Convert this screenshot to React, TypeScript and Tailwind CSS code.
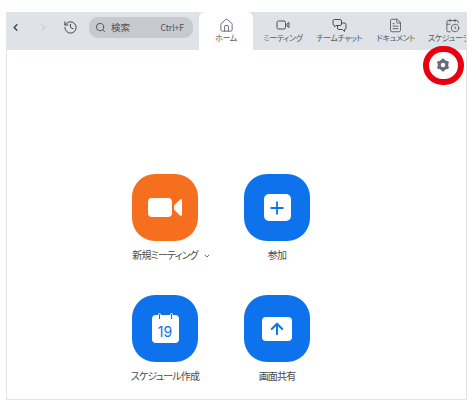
import React from "react";
import { ChevronLeft, ChevronRight, ChevronDown, Search, History, House, Plus, ArrowUp, FileText, CalendarClock } from "lucide-react";

const font = "font-['Noto_Sans_CJK_JP','Noto_Sans',sans-serif] [font-feature-settings:'palt']";

function NavTab({ icon, label, width, active }: { icon: React.ReactNode; label: string; width: string; active?: boolean }) {
  return (
    <div className={`flex shrink-0 flex-col items-center pt-[5px] ${width} ${active ? "h-[38px] rounded-t-[6px] bg-white" : ""}`}>
      <div className="flex h-[16px] items-center justify-center text-[#4a4f5c]">{icon}</div>
      <div className="-mt-[1px] whitespace-nowrap text-[8px] leading-[12px] tracking-[-0.4px] text-[#555a66]">{label}</div>
    </div>
  );
}

function Tile({ color, label, chevron, children }: { color: string; label: string; chevron?: boolean; children: React.ReactNode }) {
  return (
    <div className="relative flex w-[66px] flex-col items-center">
      <div className={`flex h-[67px] w-[66px] items-center justify-center rounded-[23px] ${color}`}>{children}</div>
      <div className="mt-[5px] flex h-[16px] items-center whitespace-nowrap text-[10px] tracking-[-0.85px] text-[#4a4a4a]">{label}</div>
      {chevron && <ChevronDown className="absolute left-[71px] top-[78px] h-[8px] w-[8px] text-[#555]" strokeWidth={2.5} />}
    </div>
  );
}

export default function App() {
  return (
    <div className={`h-[411px] w-[475px] overflow-hidden bg-white pl-[6px] pt-[12px] ${font}`}>
      <div className="relative flex h-[388px] w-[461px] flex-col overflow-hidden border-x border-b border-[#e2e2e2]">
        <div className="flex h-[38px] shrink-0 items-start bg-[#dfe3e8]">
          <div className="flex h-[31px] w-[192px] shrink-0 items-center">
            <ChevronLeft className="ml-[3px] h-[11px] w-[11px] text-[#3a3f4a]" strokeWidth={3} />
            <ChevronRight className="ml-[17px] h-[11px] w-[11px] text-[#b5b9c0]" strokeWidth={2} />
            <History className="ml-[14px] h-[15px] w-[15px] text-[#3f4450]" strokeWidth={1.6} />
            <div className="ml-[11px] flex h-[21px] w-[104px] items-center rounded-[9px] bg-[#c6c9cd] px-[6px] text-[#4b4f59]">
              <Search className="h-[11px] w-[11px]" strokeWidth={2} />
              <span className="ml-[5px] text-[9.5px] leading-none">検索</span>
              <span className="ml-auto mr-[3px] text-[8.5px] leading-none">Ctrl+F</span>
            </div>
          </div>
          <NavTab active width="w-[54px]" label="ホーム" icon={<House className="h-[15px] w-[15px]" strokeWidth={1.3} />} />
          <NavTab width="w-[56.5px] ml-[1.5px]" label="ミーティング" icon={
            <svg width="14" height="14" viewBox="0 0 14 14" fill="none" stroke="currentColor" strokeWidth="1">
              <rect x="1" y="3" width="8.5" height="8" rx="1.5" />
              <path d="M11 6 L13 4.5 V9.5 L11 8 Z" />
            </svg>
          } />
          <NavTab width="w-[56.5px]" label="チームチャット" icon={
            <svg width="15" height="15" viewBox="0 0 15 15" fill="none" stroke="currentColor" strokeWidth="1">
              <path d="M2.5 1.5 H8 Q9.5 1.5 9.5 3 V6 Q9.5 7.5 8 7.5 H4 L2.5 9 V7.4 Q1 7.2 1 6 V3 Q1 1.5 2.5 1.5 Z" />
              <path d="M9.5 5 H12 Q14 5 14 6.5 V10 Q14 11.5 12.5 11.5 V13.5 L10.5 11.5 H7 Q5.5 11.5 5.5 10 V7.5" />
            </svg>
          } />
          <NavTab width="w-[56.5px]" label="ドキュメント" icon={<FileText className="h-[15px] w-[15px]" strokeWidth={1.3} />} />
          <NavTab width="w-[56.5px]" label="スケジューラー" icon={<CalendarClock className="h-[15px] w-[15px]" strokeWidth={1.3} />} />
        </div>

        <div className="flex-1 bg-white pl-[125px] pt-[124px]">
          <div className="grid grid-cols-[66px_66px] gap-x-[46px] gap-y-[33px]">
            <Tile color="bg-[#f56f1f]" label="新規ミーティング" chevron>
              <svg width="34" height="19" viewBox="0 0 34 19" fill="white">
                <rect x="0" y="0" width="24" height="19" rx="4" />
                <path d="M26 7.5 L32 1.5 Q34 0.5 34 2.5 V16.5 Q34 18.5 32 17.5 L26 11.5 Z" />
              </svg>
            </Tile>
            <Tile color="bg-[#0e72ed]" label="参加">
              <div className="flex h-[27px] w-[27px] items-center justify-center rounded-[5px] bg-white">
                <Plus className="h-[20px] w-[20px] text-[#0e72ed]" strokeWidth={2.2} />
              </div>
            </Tile>
            <Tile color="bg-[#0e72ed]" label="スケジュール作成">
              <div className="relative flex h-[28px] w-[27px] items-center justify-center rounded-[4px] bg-white pt-[6px] font-['Inter',sans-serif] text-[14px] leading-none text-[#0e72ed]">
                19
                <span className="absolute left-[6px] top-[-2px] h-[7px] w-[3px] rounded-full border-[0.5px] border-white bg-[#0e72ed]" />
                <span className="absolute right-[6px] top-[-2px] h-[7px] w-[3px] rounded-full border-[0.5px] border-white bg-[#0e72ed]" />
              </div>
            </Tile>
            <Tile color="bg-[#0e72ed]" label="画面共有">
              <div className="flex h-[24px] w-[30px] items-center justify-center rounded-[4px] bg-white">
                <ArrowUp className="h-[18px] w-[18px] text-[#0e72ed]" strokeWidth={2.6} />
              </div>
            </Tile>
          </div>
        </div>

        <svg className="absolute left-[429px] top-[46px]" width="14" height="14" viewBox="0 0 24 24" fill="none">
          <circle cx="12" cy="12" r="6.5" stroke="#666c7d" strokeWidth="5.5" />
          <g stroke="#666c7d" strokeWidth="4.5" strokeLinecap="butt">
            <path d="M12 1 V5" />
            <path d="M12 19 V23" />
            <path d="M2.5 6.5 L6 8.5" />
            <path d="M18 15.5 L21.5 17.5" />
            <path d="M2.5 17.5 L6 15.5" />
            <path d="M18 8.5 L21.5 6.5" />
          </g>
        </svg>
        <div className="absolute left-[416px] top-[34px] h-[39px] w-[41px] rounded-full border-[6px] border-[#e8000f]" />
      </div>
    </div>
  );
}
